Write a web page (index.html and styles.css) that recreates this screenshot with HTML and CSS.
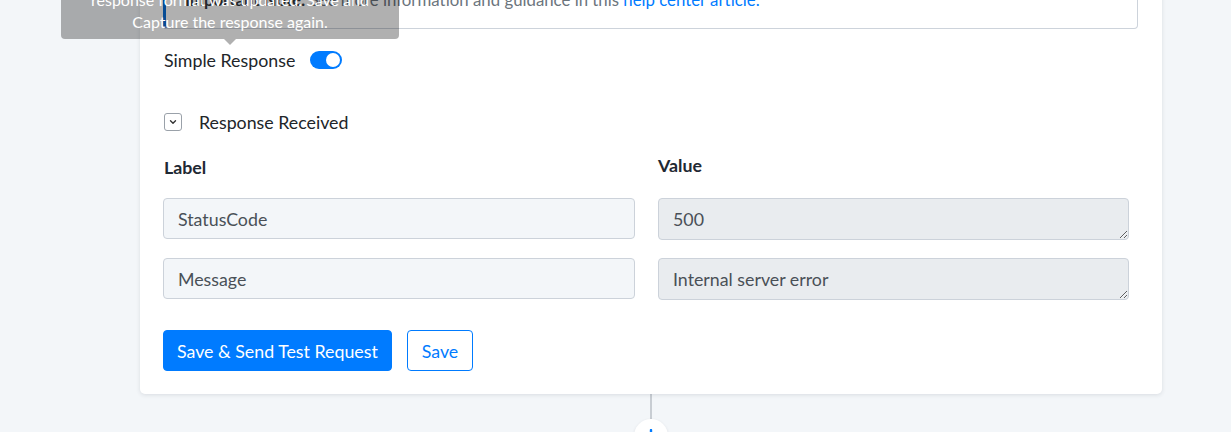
FILE: index.html
```html
<!DOCTYPE html>
<html lang="en">
<head>
  <meta charset="UTF-8">
  <meta name="viewport" content="width=device-width, initial-scale=1.0">
  <title>Webhook Response</title>
  <link rel="stylesheet" href="styles.css">
</head>
<body>

  <div class="flow">
    <div class="card">
      <div class="note">
        <strong>Important Note:</strong> See more information and guidance in this <a href="#">help center article.</a>
      </div>

      <div class="tooltip">
        response format was updated. Save and<br>
        Capture the response again.
      </div>

      <div class="switch-row">
        <span>Simple Response</span>
        <span class="switch on"></span>
      </div>

      <div class="collapse-row">
        <span class="chevron-box">
          <svg width="10" height="10" viewBox="0 0 10 10">
            <path d="M2.5 3.8 L5 6.3 L7.5 3.8" fill="none" stroke="#333" stroke-width="1.4" stroke-linecap="round" stroke-linejoin="round"/>
          </svg>
        </span>
        <span>Response Received</span>
      </div>

      <div class="fields">
        <div class="col-title">Label</div>
        <div class="col-title value-title">Value</div>

        <input class="field" type="text" value="StatusCode" readonly>
        <textarea class="field value" rows="1" readonly>500</textarea>

        <input class="field" type="text" value="Message" readonly>
        <textarea class="field value" rows="1" readonly>Internal server error</textarea>
      </div>

      <div class="actions">
        <button class="btn btn-primary">Save &amp; Send Test Request</button>
        <button class="btn btn-outline">Save</button>
      </div>
    </div>

    <div class="connector"></div>
    <div class="add-step">
      <svg width="14" height="14" viewBox="0 0 14 14">
        <path d="M7 1 V13 M1 7 H13" stroke="#007bff" stroke-width="2.4" stroke-linecap="round"/>
      </svg>
    </div>
  </div>

</body>
</html>
```

FILE: styles.css
```css
body {
  margin: 0;
  background-color: #f3f6f9;
  font-family: Lato, "Open Sans", sans-serif;
  font-size: 17.8px;
  color: #212529;
  overflow: hidden;
}

.flow {
  width: 1022px;
  margin-left: 140px;
  display: flex;
  flex-direction: column;
  align-items: center;
}

.card {
  position: relative;
  box-sizing: border-box;
  width: 1022px;
  margin-top: -45px;
  padding: 20px 24px 23px 23px;
  background-color: #fff;
  border-radius: 0 0 5px 5px;
  box-shadow: 0 1px 4px rgba(30, 45, 60, 0.12);
}

.note {
  padding: 12px 20px 16px 19px;
  border: 1px solid #cdd3db;
  border-left: 3px solid #0a6fd8;
  border-radius: 4px;
  font-size: 16.8px;
  line-height: 24px;
  color: #6c757d;
}

.note strong {
  color: #343a40;
}

.note a {
  color: #007bff;
  text-decoration: none;
}

/* hover hint over the note */
.tooltip {
  position: absolute;
  top: 28px;
  left: -79px;
  width: 338px;
  box-sizing: border-box;
  padding: 6px 8px;
  background-color: rgba(0, 0, 0, 0.31);
  border-radius: 4px;
  color: #fff;
  font-size: 16px;
  line-height: 22px;
  text-align: center;
}

.tooltip::after {
  content: "";
  position: absolute;
  left: 50%;
  bottom: -6px;
  margin-left: -6px;
  border-left: 6px solid transparent;
  border-right: 6px solid transparent;
  border-top: 6px solid rgba(0, 0, 0, 0.31);
}

.switch-row {
  display: flex;
  align-items: center;
  gap: 15px;
  margin-top: 19px;
  height: 24px;
  padding-left: 1px;
}

.switch {
  position: relative;
  width: 32px;
  height: 18px;
  border-radius: 9px;
  background-color: #adb5bd;
}

.switch.on {
  background-color: #007bff;
}

.switch::after {
  content: "";
  position: absolute;
  top: 2px;
  left: 2px;
  width: 14px;
  height: 14px;
  border-radius: 50%;
  background-color: #fff;
}

.switch.on::after {
  left: 16px;
}

.collapse-row {
  display: flex;
  align-items: center;
  gap: 17px;
  margin-top: 38px;
  height: 24px;
  padding-left: 1px;
}

.chevron-box {
  box-sizing: border-box;
  width: 18px;
  height: 18px;
  display: flex;
  justify-content: center;
  align-items: center;
  border: 1px solid #9aa1a9;
  border-radius: 3px;
}

.fields {
  display: grid;
  grid-template-columns: 472px 471px;
  column-gap: 23px;
  row-gap: 18px;
  margin-top: 20px;
}

.col-title {
  font-weight: bold;
  line-height: 24px;
  color: #1f2933;
  padding-top: 1px;
  padding-left: 1px;
  margin-bottom: 1px;
}

.value-title {
  margin-top: -2px;
  margin-left: -1px;
}

.field {
  box-sizing: border-box;
  width: 100%;
  height: 41px;
  margin: 0;
  padding: 8px 14px;
  font-family: inherit;
  font-size: 17.8px;
  line-height: 24px;
  color: #495057;
  background-color: #f3f6f9;
  border: 1px solid #ccd2da;
  border-radius: 4px;
  outline: none;
}

.field.value {
  height: 42px;
  background-color: #e9ecef;
  resize: vertical;
  overflow: hidden;
}

.actions {
  display: flex;
  gap: 15px;
  margin-top: 30px;
}

.btn {
  height: 41px;
  padding: 0 13px;
  font-family: inherit;
  font-size: 17.8px;
  border-radius: 4px;
  cursor: pointer;
}

.btn-primary {
  background-color: #007bff;
  border: 1px solid #007bff;
  color: #fff;
}

.btn-outline {
  padding: 0 14px;
  background-color: #fff;
  border: 1px solid #007bff;
  color: #007bff;
}

.connector {
  width: 2px;
  height: 25px;
  background-color: #c8cdd3;
}

.add-step {
  width: 34px;
  height: 34px;
  border-radius: 50%;
  background-color: #fff;
  box-shadow: 0 1px 3px rgba(30, 45, 60, 0.12);
  display: flex;
  justify-content: center;
  align-items: center;
}
```
